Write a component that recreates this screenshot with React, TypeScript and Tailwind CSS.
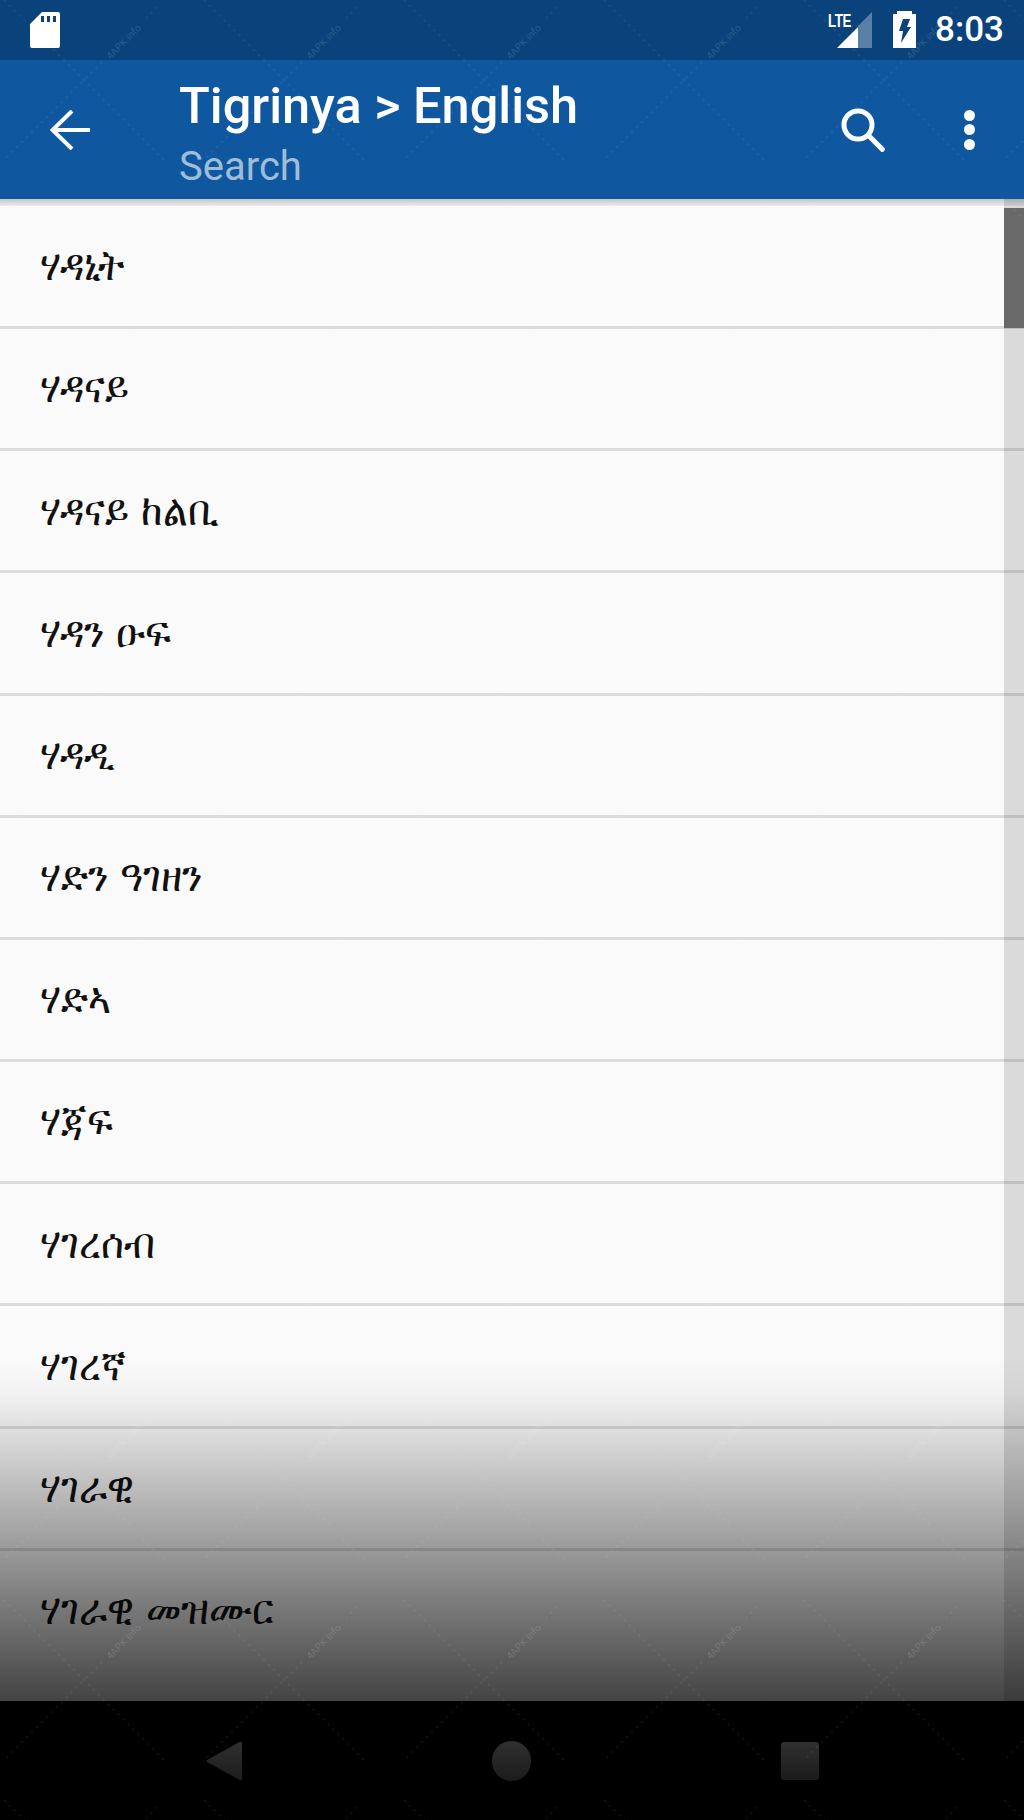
const rows = ["ሃዳኒት","ሃዳናይ","ሃዳናይ ከልቢ","ሃዳን ዑፍ","ሃዳዲ","ሃድን ዓገዘን","ሃድኣ","ሃጃፍ","ሃገረሰብ","ሃገረኛ","ሃገራዊ","ሃገራዊ መዝሙር"];
const marksX = [124, 324, 524, 724, 924];
const marksY = [42, 1442, 1642];

function SdIcon() {
  return (
    <svg width="30" height="36" viewBox="0 0 30 36" className="fill-white">
      <path fillRule="evenodd" d="M12 0h16a2 2 0 0 1 2 2v32a2 2 0 0 1-2 2H2a2 2 0 0 1-2-2V12zM11 4v6h3V4zM17 4v6h3V4zM23 4v6h3V4z" />
    </svg>
  );
}

function Watermark() {
  return (
    <div className="absolute inset-0 z-20 pointer-events-none">
      <svg width="1024" height="1820" className="absolute inset-0">
        <defs>
          <pattern id="wm" width="200" height="200" patternUnits="userSpaceOnUse">
            <path d="M102 62 4 160M157 7 146 18M4 0l163 163" stroke="#fff" strokeOpacity="0.08" strokeWidth="1.5" strokeDasharray="2 5" fill="none" />
          </pattern>
        </defs>
        <rect width="1024" height="1820" fill="url(#wm)" />
      </svg>
      {marksY.flatMap((y) =>
        marksX.map((x) => (
          <span
            key={`${x}-${y}`}
            className="absolute -translate-x-1/2 -translate-y-1/2 -rotate-45 text-[10px] leading-[12px] text-white/15 whitespace-nowrap"
            style={{ left: x, top: y }}
          >
            4APK.info
          </span>
        ))
      )}
    </div>
  );
}

export default function App() {
  return (
    <div className="relative w-[1024px] h-[1820px] overflow-hidden bg-[#fafafa] font-['Roboto',sans-serif] flex flex-col">
      <div className="h-[60px] shrink-0 bg-[#0a437b] flex items-center justify-between pl-[30px] pr-[20px]">
        <SdIcon />
        <div className="flex items-center">
          <div className="relative w-[44px] h-[36px] mr-[21px] mt-[-1px]">
            <svg width="44" height="36" viewBox="0 0 44 36" className="absolute inset-0">
              <path d="M44 0V36H30V14z" fill="#fff" fillOpacity="0.32" />
              <path d="M9 36 30 15V36z" fill="#fff" />
            </svg>
            <span className="absolute left-0 top-[-2px] text-[19px] leading-[22px] font-bold text-white font-['Liberation_Sans',sans-serif] origin-left scale-x-[0.7] tracking-[-0.5px]">LTE</span>
          </div>
          <svg width="23" height="37" viewBox="0 0 23 37" className="mr-[19px] mt-[-1px]">
            <path d="M4 0h15v3h4v34H0V3h4z" fill="#fff" />
            <path d="M10 8h7l-3 8h4L8 32l2-12H6z" fill="#0a437b" />
          </svg>
          <span className="text-[35px] leading-[40px] font-medium text-white">8:03</span>
        </div>
      </div>

      <header className="relative h-[139px] shrink-0 bg-[#0f589f] flex items-center">
        <div className="w-[179px] shrink-0 pl-[50px]">
          <svg width="40" height="40" viewBox="0 0 40 40" fill="none" stroke="#fff" strokeWidth="4">
            <path d="M40 20H2M22 1 2.5 20 22 39" />
          </svg>
        </div>
        <div className="flex-1 flex flex-col pt-[13px]">
          <div className="text-[50.5px] leading-[60px] font-medium text-white">Tigrinya &gt; English</div>
          <div className="text-[40px] leading-[60px] translate-y-[1px] text-[#9fbcd9]">Search</div>
        </div>
        <svg width="44" height="44" viewBox="0 0 44 44" fill="none" stroke="#fff" strokeWidth="5" className="mr-[79px]">
          <circle cx="17" cy="17" r="14" />
          <path d="m27 27 16 16" />
        </svg>
        <div className="flex flex-col gap-[3.5px] mr-[49px]">
          <span className="w-[11px] h-[11px] rounded-full bg-white" />
          <span className="w-[11px] h-[11px] rounded-full bg-white" />
          <span className="w-[11px] h-[11px] rounded-full bg-white" />
        </div>
      </header>

      <div className="h-[7px] shrink-0 bg-gradient-to-b from-[#c6c6c6] to-[#ececec]" />

      <div className="flex-1 min-h-0 overflow-hidden pt-[0.8px]">
        {rows.map((r, i) => (
          <div
            key={r}
            className={`h-[122.2px] border-[#dcdcdc] flex items-center pl-[40px] text-[39px] text-[#111] font-['DejaVu_Sans',sans-serif] ${i === rows.length - 1 ? "" : "border-b-[3px]"}`}
          >
            <span className={`inline-block origin-center scale-y-[1.1] ${i === rows.length - 1 ? "-translate-y-[2px]" : ""}`}>{r}</span>
          </div>
        ))}
      </div>

      <div className="absolute right-0 top-[199px] h-[1502px] w-[20px] bg-black/[0.125]">
        <div className="mt-[9px] h-[120px] bg-[#696969]" />
      </div>
      <div className="absolute left-0 right-0 top-[1355px] h-[346px] bg-gradient-to-b from-transparent via-black/[0.03] via-[11%] to-black/[0.73]" />

      <div className="h-[119px] shrink-0 bg-black flex items-center justify-center relative z-10">
        <div className="flex items-center gap-[250px] ml-[1px] mt-[1px]">
          <svg width="36" height="40" viewBox="0 0 36 40">
            <defs>
              <linearGradient id="navg" x1="0" y1="0" x2="0" y2="1">
                <stop offset="0" stopColor="#303030" />
                <stop offset="1" stopColor="#1c1c1c" />
              </linearGradient>
            </defs>
            <path d="M36 2v36a1.500 1.500 0 0 1-2.500 1L1 21a1.500 1.500 0 0 1 0-2L33.500 1a1.500 1.500 0 0 1 2.500 1z" fill="url(#navg)" />
          </svg>
          <span className="w-[39px] h-[40px] rounded-full bg-gradient-to-b from-[#303030] to-[#1c1c1c]" />
          <span className="w-[38px] h-[38px] rounded-[3px] bg-gradient-to-b from-[#303030] to-[#1c1c1c]" />
        </div>
      </div>

      <Watermark />
    </div>
  );
}
